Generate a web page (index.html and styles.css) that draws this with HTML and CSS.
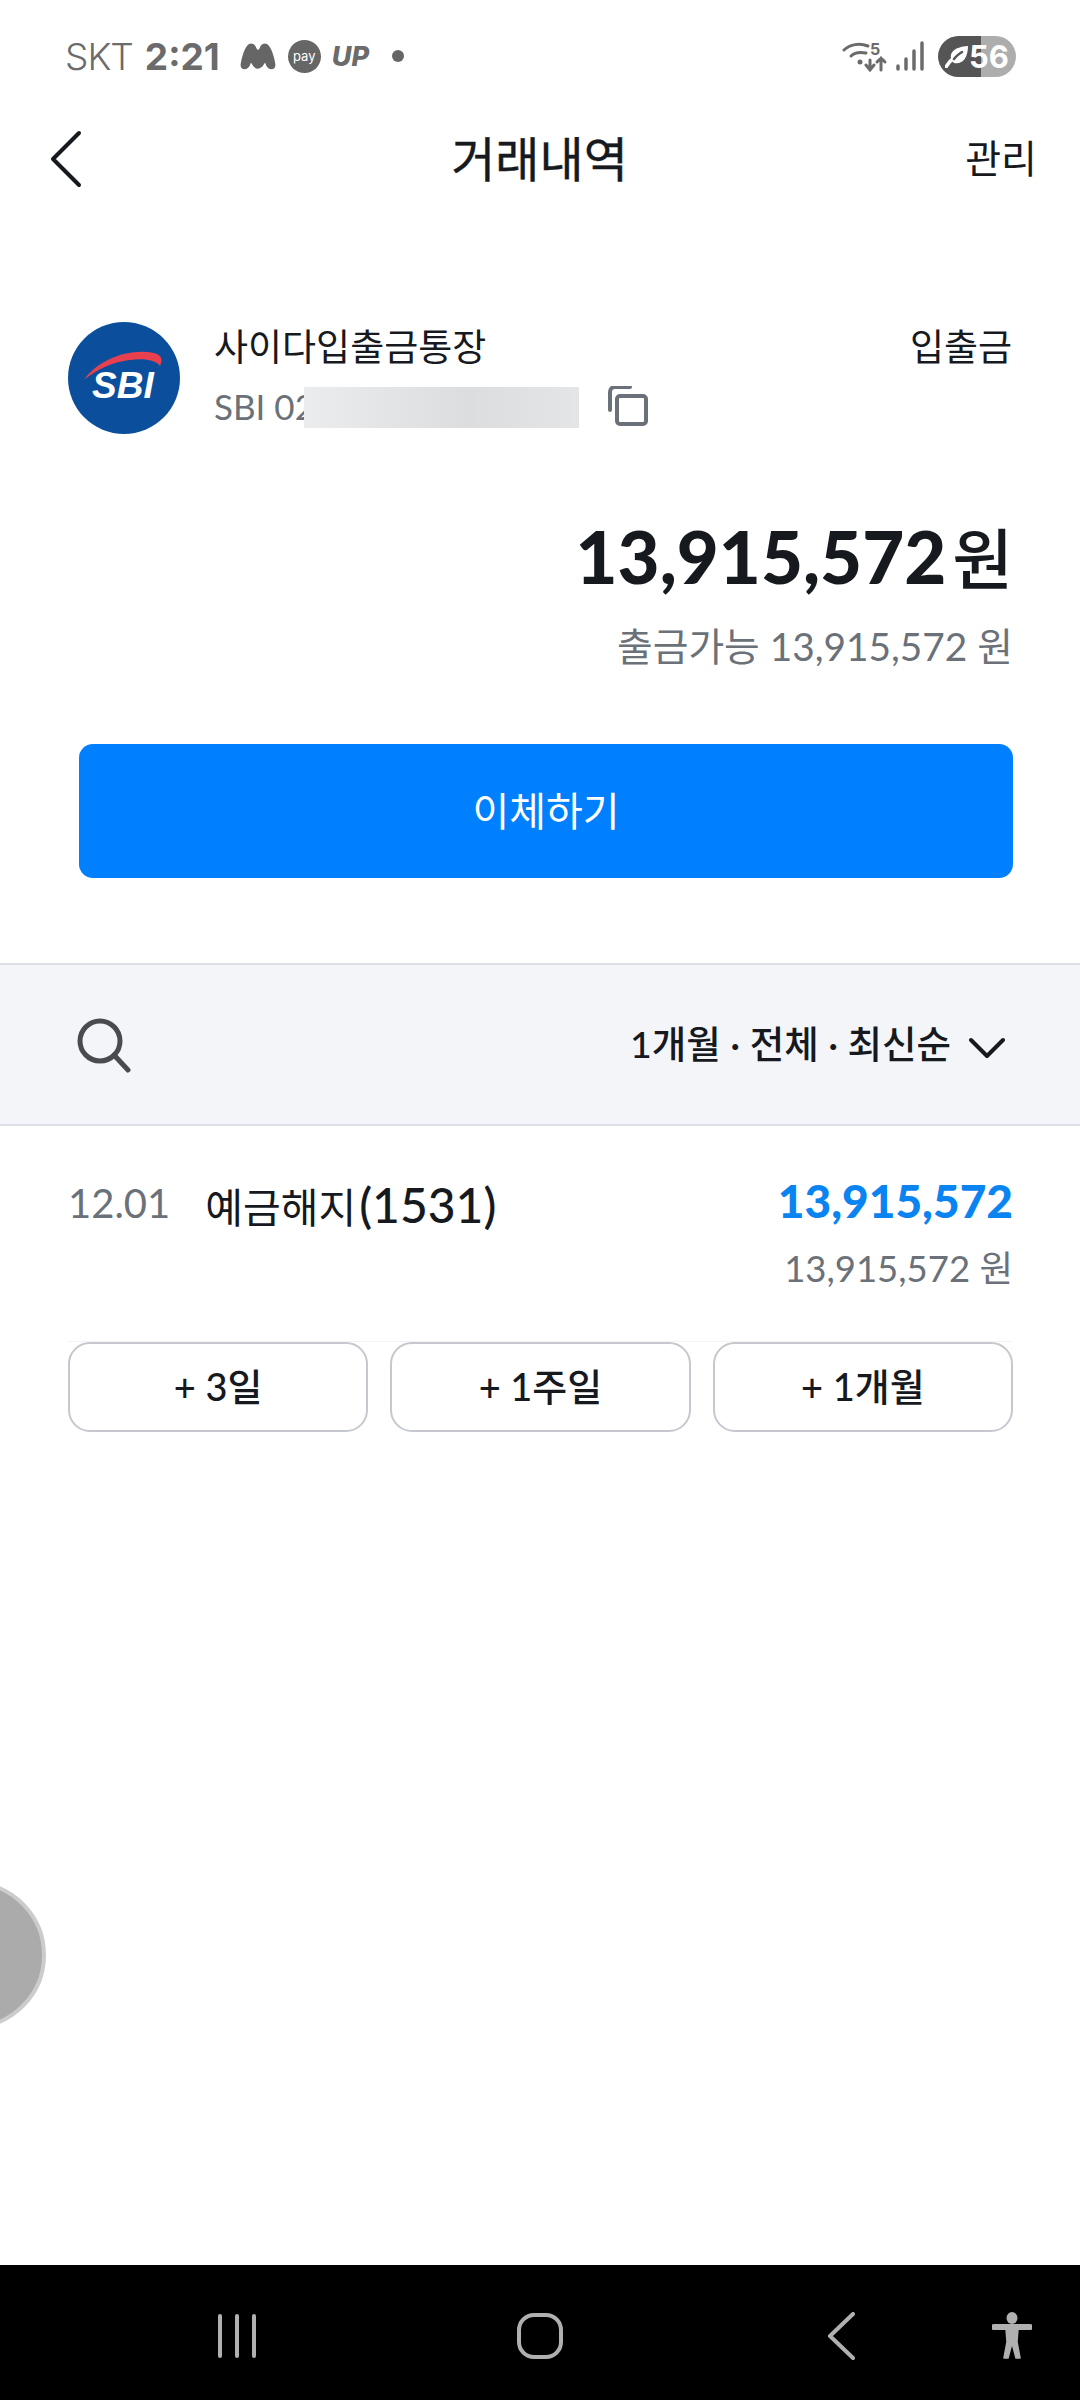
FILE: index.html
```html
<!DOCTYPE html>
<html>
  <head>
    <meta charset="UTF-8">
    <title>거래내역</title>
    <link rel="stylesheet" href="styles.css">
  </head>
  <body>
    <div class="status-bar">
      <span class="carrier">SKT</span>
      <span class="clock">2:21</span>
      <svg class="ic-m" width="38" height="30" viewBox="0 0 36 28"><path d="M3 22C4 15 7 6 10 4C12 3 14 4 15 7L18 11L21 7C22 4 24 3 26 4C29 6 32 15 33 22C33 26 29 26 27 22L25 17L21 23C19 25 17 25 15 23L11 17L9 22C7 26 3 26 3 22Z" fill="#666" stroke="#666" stroke-width="3" stroke-linejoin="round"/></svg>
      <span class="ic-pay">pay</span>
      <span class="ic-up">UP</span>
      <span class="ic-dot"></span>
      <span class="status-right">
        <svg width="46" height="32" viewBox="0 0 46 32"><g fill="none" stroke="#6b6b6b" stroke-width="3" stroke-linecap="round"><path d="M2 10C8 4 18 3 26 6"/><path d="M9 16C13 12 19 12 24 13"/><path d="M28 30V20M24 25L28 30L32 25"/><path d="M39 30V18M35 22L39 18L43 22"/></g><circle cx="18" cy="22" r="2.5" fill="#6b6b6b"/><text x="28" y="15" class="wifi-num">5</text></svg>
        <svg class="ic-signal" width="28" height="30" viewBox="0 0 28 30"><g stroke="#6b6b6b" stroke-width="3.5" stroke-linecap="round"><path d="M2 28V25"/><path d="M10 28V18"/><path d="M18 28V10"/><path d="M26 28V2"/></g></svg>
        <span class="battery">
          <svg width="24" height="24" viewBox="0 0 24 24"><path d="M7 17C3 9 9 3 23 2C23 14 17 21 9 19Z" fill="#fff"/><path d="M1 23C3 19 6 16 9 14" fill="none" stroke="#fff" stroke-width="3.5" stroke-linecap="round"/><path d="M9 15C11 12 14 10 17 8" fill="none" stroke="#555" stroke-width="2.5" stroke-linecap="round"/></svg>
          <span>56</span>
        </span>
      </span>
    </div>

    <div class="app-bar">
      <svg class="back" width="32" height="58" viewBox="0 0 32 58"><path d="M29 3L3 29L29 55" fill="none" stroke="#16191e" stroke-width="4" stroke-linecap="round" stroke-linejoin="round"/></svg>
      <h1 class="title">거래내역</h1>
      <a class="manage">관리</a>
    </div>

    <div class="account">
      <svg class="logo" width="112" height="112" viewBox="0 0 112 112">
        <circle cx="56" cy="56" r="56" fill="#0b4f9c"/>
        <path d="M16 58C30 38 60 26 86 31C94 33 95 38 92 44C88 38 76 36 62 38C44 40 28 48 16 58Z" fill="#e8404f"/>
        <text x="24" y="76" class="logo-text">SBI</text>
      </svg>
      <div class="account-info">
        <div class="account-name">사이다입출금통장</div>
        <div class="account-no">
          <span class="account-prefix">SBI 02</span>
          <span class="blur-box"></span>
          <svg width="40" height="40" viewBox="0 0 40 40"><g fill="none" stroke="#6b7178" stroke-width="4" stroke-linecap="round" stroke-linejoin="round"><path d="M2 24V6C2 3 4 1 7 1H22"/><rect x="9" y="10" width="29" height="28" rx="3"/></g></svg>
        </div>
      </div>
      <div class="account-type">입출금</div>
    </div>

    <div class="balance">
      <div class="balance-main"><strong>13,915,572</strong><span>원</span></div>
      <div class="balance-sub">출금가능 13,915,572 원</div>
    </div>

    <button class="transfer">이체하기</button>

    <div class="filter-bar">
      <svg width="56" height="56" viewBox="0 0 56 56"><g fill="none" stroke="#484b50" stroke-width="5" stroke-linecap="round"><circle cx="24" cy="24" r="20"/><path d="M38 38L52 53"/></g></svg>
      <div class="filter-text">1개월 · 전체 · 최신순</div>
      <svg class="filter-arrow" width="36" height="22" viewBox="0 0 36 22"><path d="M2 3L18 19L34 3" fill="none" stroke="#16191e" stroke-width="4" stroke-linecap="round" stroke-linejoin="round"/></svg>
    </div>

    <div class="tx">
      <div class="tx-row">
        <span class="tx-date">12.01</span>
        <span class="tx-name">예금해지<span class="tx-code">(1531)</span></span>
        <span class="tx-amount">13,915,572</span>
      </div>
      <div class="tx-balance">13,915,572 원</div>
    </div>

    <div class="quick">
      <button class="quick-btn">+ 3일</button>
      <button class="quick-btn">+ 1주일</button>
      <button class="quick-btn">+ 1개월</button>
    </div>

    <div class="float-ball"></div>

    <div class="nav-bar">
      <svg class="nav-recent" width="40" height="44" viewBox="0 0 40 44"><g stroke="#b0b0b0" stroke-width="4" stroke-linecap="round"><path d="M3 2V42"/><path d="M20 2V42"/><path d="M37 2V42"/></g></svg>
      <svg class="nav-home" width="46" height="46" viewBox="0 0 46 46"><rect x="2" y="2" width="42" height="42" rx="15" fill="none" stroke="#b0b0b0" stroke-width="4"/></svg>
      <svg class="nav-back" width="28" height="48" viewBox="0 0 28 48"><path d="M26 2L3 24L26 46" fill="none" stroke="#b0b0b0" stroke-width="4" stroke-linecap="round" stroke-linejoin="round"/></svg>
      <svg class="nav-access" width="40" height="48" viewBox="0 0 40 48"><ellipse cx="20" cy="6" rx="5.5" ry="6" fill="#b0b0b0"/><path d="M2 15H38M20 15V28" stroke="#b0b0b0" stroke-width="6" stroke-linecap="round"/><path d="M14 17H26L25 30L28 46H24L20 31L16 46H12L15 30Z" fill="#b0b0b0" stroke="#b0b0b0" stroke-width="1.5" stroke-linejoin="round"/></svg>
    </div>
  </body>
</html>
```

FILE: styles.css
```css
* {
  box-sizing: border-box;
}

body {
  position: relative;
  display: flex;
  flex-direction: column;
  width: 1080px;
  height: 2400px;
  margin: 0;
  overflow: hidden;
  background-color: #FFFFFF;
  color: #16191E;
  font-family: Lato, "Noto Sans CJK KR", sans-serif;
}

.status-bar {
  display: flex;
  align-items: center;
  height: 112px;
  padding: 0 64px 0 65px;
  color: #6B6B6B;
  font-family: Inter, Roboto, sans-serif;
}

.carrier {
  font-size: 37px;
  font-weight: 300;
  letter-spacing: -1px;
}

.clock {
  margin-left: 12px;
  font-size: 37px;
  font-weight: 700;
}

.ic-m {
  margin-left: 19px;
}

.ic-pay {
  display: flex;
  align-items: center;
  justify-content: center;
  width: 33px;
  height: 33px;
  margin-left: 11px;
  border-radius: 50%;
  background-color: #666666;
  color: #FFFFFF;
  font-size: 13px;
}

.ic-up {
  margin-left: 11px;
  font-size: 27px;
  font-weight: 800;
  font-style: italic;
}

.ic-dot {
  width: 12px;
  height: 12px;
  margin-left: 23px;
  border-radius: 50%;
  background-color: #666666;
}

.status-right {
  display: flex;
  align-items: center;
  gap: 8px;
  margin-left: auto;
}

.wifi-num {
  fill: #6B6B6B;
  font-size: 16px;
  font-weight: 700;
}

.battery {
  display: flex;
  align-items: center;
  justify-content: center;
  width: 78px;
  height: 41px;
  margin-left: 6px;
  border-radius: 21px;
  background: linear-gradient(90deg, #555555 55%, #ADADAD 55%);
  color: #FFFFFF;
  font-size: 31px;
  font-weight: 700;
}

.app-bar {
  display: grid;
  grid-template-columns: 1fr auto 1fr;
  align-items: center;
  height: 93px;
  padding: 0 43px 6px 50px;
}

.back {
  margin-top: 6px;
}

.title {
  margin: 0 8px 0 0;
  font-size: 48px;
  font-weight: 400;
  -webkit-text-stroke: 0.4px #16191E;
}

.manage {
  font-size: 39px;
  text-align: right;
}

.account {
  display: flex;
  align-items: flex-start;
  padding: 117px 68px 0;
}

.account-info {
  margin-left: 34px;
}

.account-name {
  font-size: 37px;
  line-height: 50px;
}

.account-no {
  display: flex;
  align-items: center;
  margin-top: 11px;
  color: #6B7178;
  font-size: 35px;
  line-height: 46px;
}

.account-prefix {
  width: 90px;
  white-space: nowrap;
}

.blur-box {
  position: relative;
  width: 275px;
  height: 41px;
  margin: 2px 29px 0 0;
  background: linear-gradient(90deg, #EBECED, #DCDDDF 60%, #E4E5E7);
}

.account-type {
  margin-left: auto;
  font-size: 37px;
  line-height: 50px;
}

.logo-text {
  fill: #FFFFFF;
  font-family: "Liberation Sans", sans-serif;
  font-size: 37px;
  font-weight: 700;
  font-style: italic;
}

.balance {
  padding: 77px 67px 0 68px;
  text-align: right;
}

.balance-main {
  line-height: 90px;
}

.balance-main strong {
  font-size: 72.5px;
  font-weight: 900;
}

.balance-main span {
  margin-left: 6px;
  font-size: 66px;
  font-weight: 500;
}

.balance-sub {
  margin-top: -2px;
  color: #6B7178;
  font-size: 38.8px;
  line-height: 50px;
}

.transfer {
  align-self: flex-start;
  width: 934px;
  height: 134px;
  margin: 73px 0 0 79px;
  padding-bottom: 5px;
  border: none;
  border-radius: 14px;
  background-color: #0080FF;
  color: #FFFFFF;
  font-family: inherit;
  font-size: 40px;
}

.filter-bar {
  display: flex;
  align-items: center;
  height: 163px;
  margin-top: 85px;
  padding: 0 75px 0 76px;
  border-top: 2px solid #DCDFE5;
  border-bottom: 2px solid #DCDFE5;
  background-color: #F3F5F9;
}

.filter-text {
  margin: 0 18px 6px auto;
  font-size: 37.5px;
  font-weight: 500;
}

.filter-arrow {
  margin-top: 6px;
}

.tx {
  padding: 47px 67px 0 68px;
}

.tx-row {
  display: flex;
  align-items: flex-start;
}

.tx-date {
  margin-top: 6px;
  color: #6B7178;
  font-size: 40px;
}

.tx-name {
  margin: 2px 0 0 35px;
  font-size: 41px;
}

.tx-code {
  margin-left: 3px;
  font-size: 48px;
  font-weight: 500;
}

.tx-amount {
  margin-left: auto;
  color: #0A84F0;
  font-size: 46px;
  font-weight: 900;
}

.tx-balance {
  margin-top: 5px;
  color: #6B7178;
  font-size: 36.5px;
  text-align: right;
}

.quick {
  display: flex;
  gap: 22px;
  margin: 48px 67px 0 68px;
  border-top: 1px solid #F3F3F3;
}

.quick-btn {
  flex: 1;
  height: 90px;
  padding-bottom: 7px;
  border: 2px solid #C5C8CE;
  border-radius: 22px;
  background-color: #FFFFFF;
  color: #16191E;
  font-family: inherit;
  font-size: 38px;
  font-weight: 500;
}

.float-ball {
  position: absolute;
  top: 1881px;
  left: -102px;
  width: 148px;
  height: 148px;
  border: 4px solid #CCCCCC;
  border-radius: 50%;
  background-color: #ABABAB;
}

.nav-bar {
  display: flex;
  align-items: center;
  height: 135px;
  margin-top: auto;
  padding: 6px 0 0 217px;
  background-color: #000000;
}

.nav-home {
  margin-left: 260px;
}

.nav-back {
  margin-left: 264px;
}

.nav-access {
  margin-left: 137px;
}
```
